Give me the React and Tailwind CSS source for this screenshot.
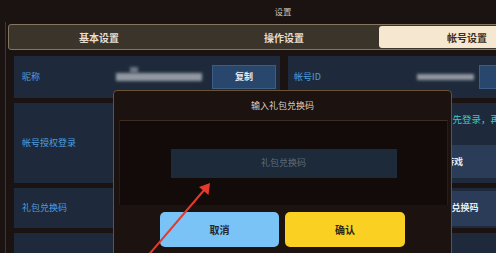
import React from "react";

export default function App() {
  return (
    <div
      className="relative w-[496px] h-[253px] overflow-hidden bg-[#1a1311]"
      style={{ fontFamily: '"Noto Sans CJK SC", "Noto Sans", sans-serif' }}
    >
      <div className="w-[566px] flex flex-col">
        <div className="shrink-0 h-[22px] flex items-center justify-center text-[8.5px] text-[#c9c1b8]">
          设置
        </div>
        <div className="shrink-0 h-[260px] mx-[5px] border-x border-[#45362a] px-[2px] flex flex-col">
          {/* tab bar */}
          <div className="shrink-0 mt-[2px] h-[26px] border border-[#85765f] rounded-[3px] bg-[#3a342b] flex pt-[1px] pb-[1px]">
            <div className="w-[180px] flex items-center justify-center text-[10px] font-bold text-[#e6ddd0]">
              基本设置
            </div>
            <div className="w-[190px] flex items-center justify-center text-[10px] font-bold text-[#e6ddd0]">
              操作设置
            </div>
            <div className="w-[176px] flex items-center justify-center text-[10px] font-bold text-[#3b2f24] bg-[#f6e7d1] rounded-[3px]">
              帐号设置
            </div>
          </div>
          {/* content */}
          <div className="shrink-0 mt-[6px] px-[6px] flex flex-col gap-[5px] text-[9px] text-[#4d9fdf]">
            <div className="shrink-0 h-[42px] flex gap-[8px]">
              <div className="flex-1 bg-[#1e2a3b] flex items-center pl-[8px] pr-[4px]">
                <div className="w-[94px]">昵称</div>
                <div className="relative w-[86px] h-[8px]">
                  <div className="absolute inset-0 bg-[#aeb4bc] blur-[1.5px] opacity-80" />
                  <div className="absolute left-[14px] -top-[6px] w-[8px] h-[6px] bg-[#8f969f] blur-[1.5px] opacity-70" />
                </div>
                <div className="ml-auto w-[64px] h-[24px] bg-[#29466c] border border-[#3b5d86] flex items-center justify-center text-[9px] text-[#e8ecf0] font-bold">
                  复制
                </div>
              </div>
              <div className="flex-1 bg-[#1e2a3b] flex items-center pl-[6px] pr-[4px]">
                <div className="w-[123px]">帐号ID</div>
                <div className="w-[57px] h-[6px] bg-[#aeb4bc] blur-[1.5px] opacity-80" />
                <div className="ml-auto w-[69px] h-[24px] bg-[#29466c] border border-[#3b5d86]" />
              </div>
            </div>
            <div className="shrink-0 h-[80px] bg-[#1e2a3b] flex">
              <div className="flex-1 flex items-center pl-[8px]">帐号授权登录</div>
              <div className="w-[172px] flex flex-col pt-[10px]">
                <div className="h-[12px] leading-[12px] pl-[63px] whitespace-nowrap overflow-hidden text-[9.5px] text-[#3fc7c9]">
                  请先登录，再进入
                </div>
                <div className="mt-[20px] w-[130px] h-[33px] bg-[#2a3c57] flex items-center justify-center text-[9px] text-[#e8ecf0] font-bold">
                  进入游戏
                </div>
              </div>
            </div>
            <div className="shrink-0 h-[40px] bg-[#1e2a3b] flex">
              <div className="flex-1 flex items-center pl-[8px]">礼包兑换码</div>
              <div className="w-[172px] flex items-center">
                <div className="w-[152px] h-[35px] bg-[#2a3c57] flex items-center justify-center text-[9px] text-[#e8ecf0] font-bold">
                  输入兑换码
                </div>
              </div>
            </div>
            <div className="shrink-0 h-[40px] bg-[#1e2a3b]" />
          </div>
        </div>
      </div>

      {/* modal */}
      <div className="absolute left-[113px] top-[90px] w-[339px] h-[175px] bg-[#1c120f] border-[1.5px] border-[#6a5234] rounded-t-[4px] flex flex-col">
        <div className="h-[29px] flex items-center justify-center text-[9px] text-[#d8d0c6]">
          输入礼包兑换码
        </div>
        <div className="mx-[5px] mr-[3px] h-[85px] bg-[#130b09] border-t border-[#3f2d22] border-x border-x-[#2a1d17] flex items-center justify-center">
          <div className="w-[226px] h-[29px] bg-[#1c2a39] flex items-center justify-center text-[9px] text-[#5c6c7d]">
            礼包兑换码
          </div>
        </div>
        <div className="mt-[7px] flex justify-center gap-[6px]">
          <div className="w-[119px] h-[35px] rounded-[5px] bg-[#79c3f7] flex items-center justify-center text-[10px] font-bold text-[#23282e]">
            取消
          </div>
          <div className="w-[120px] h-[35px] rounded-[5px] bg-[#fad022] flex items-center justify-center text-[10px] font-bold text-[#2c2614]">
            确认
          </div>
        </div>
      </div>

      {/* red annotation arrow */}
      <svg className="absolute left-0 top-0" width="496" height="253" viewBox="0 0 496 253">
        <line x1="146" y1="258" x2="205" y2="189" stroke="#e53a2b" strokeWidth="2" />
        <polygon points="210,183 208.5,195 199,187" fill="#e53a2b" />
      </svg>
    </div>
  );
}
